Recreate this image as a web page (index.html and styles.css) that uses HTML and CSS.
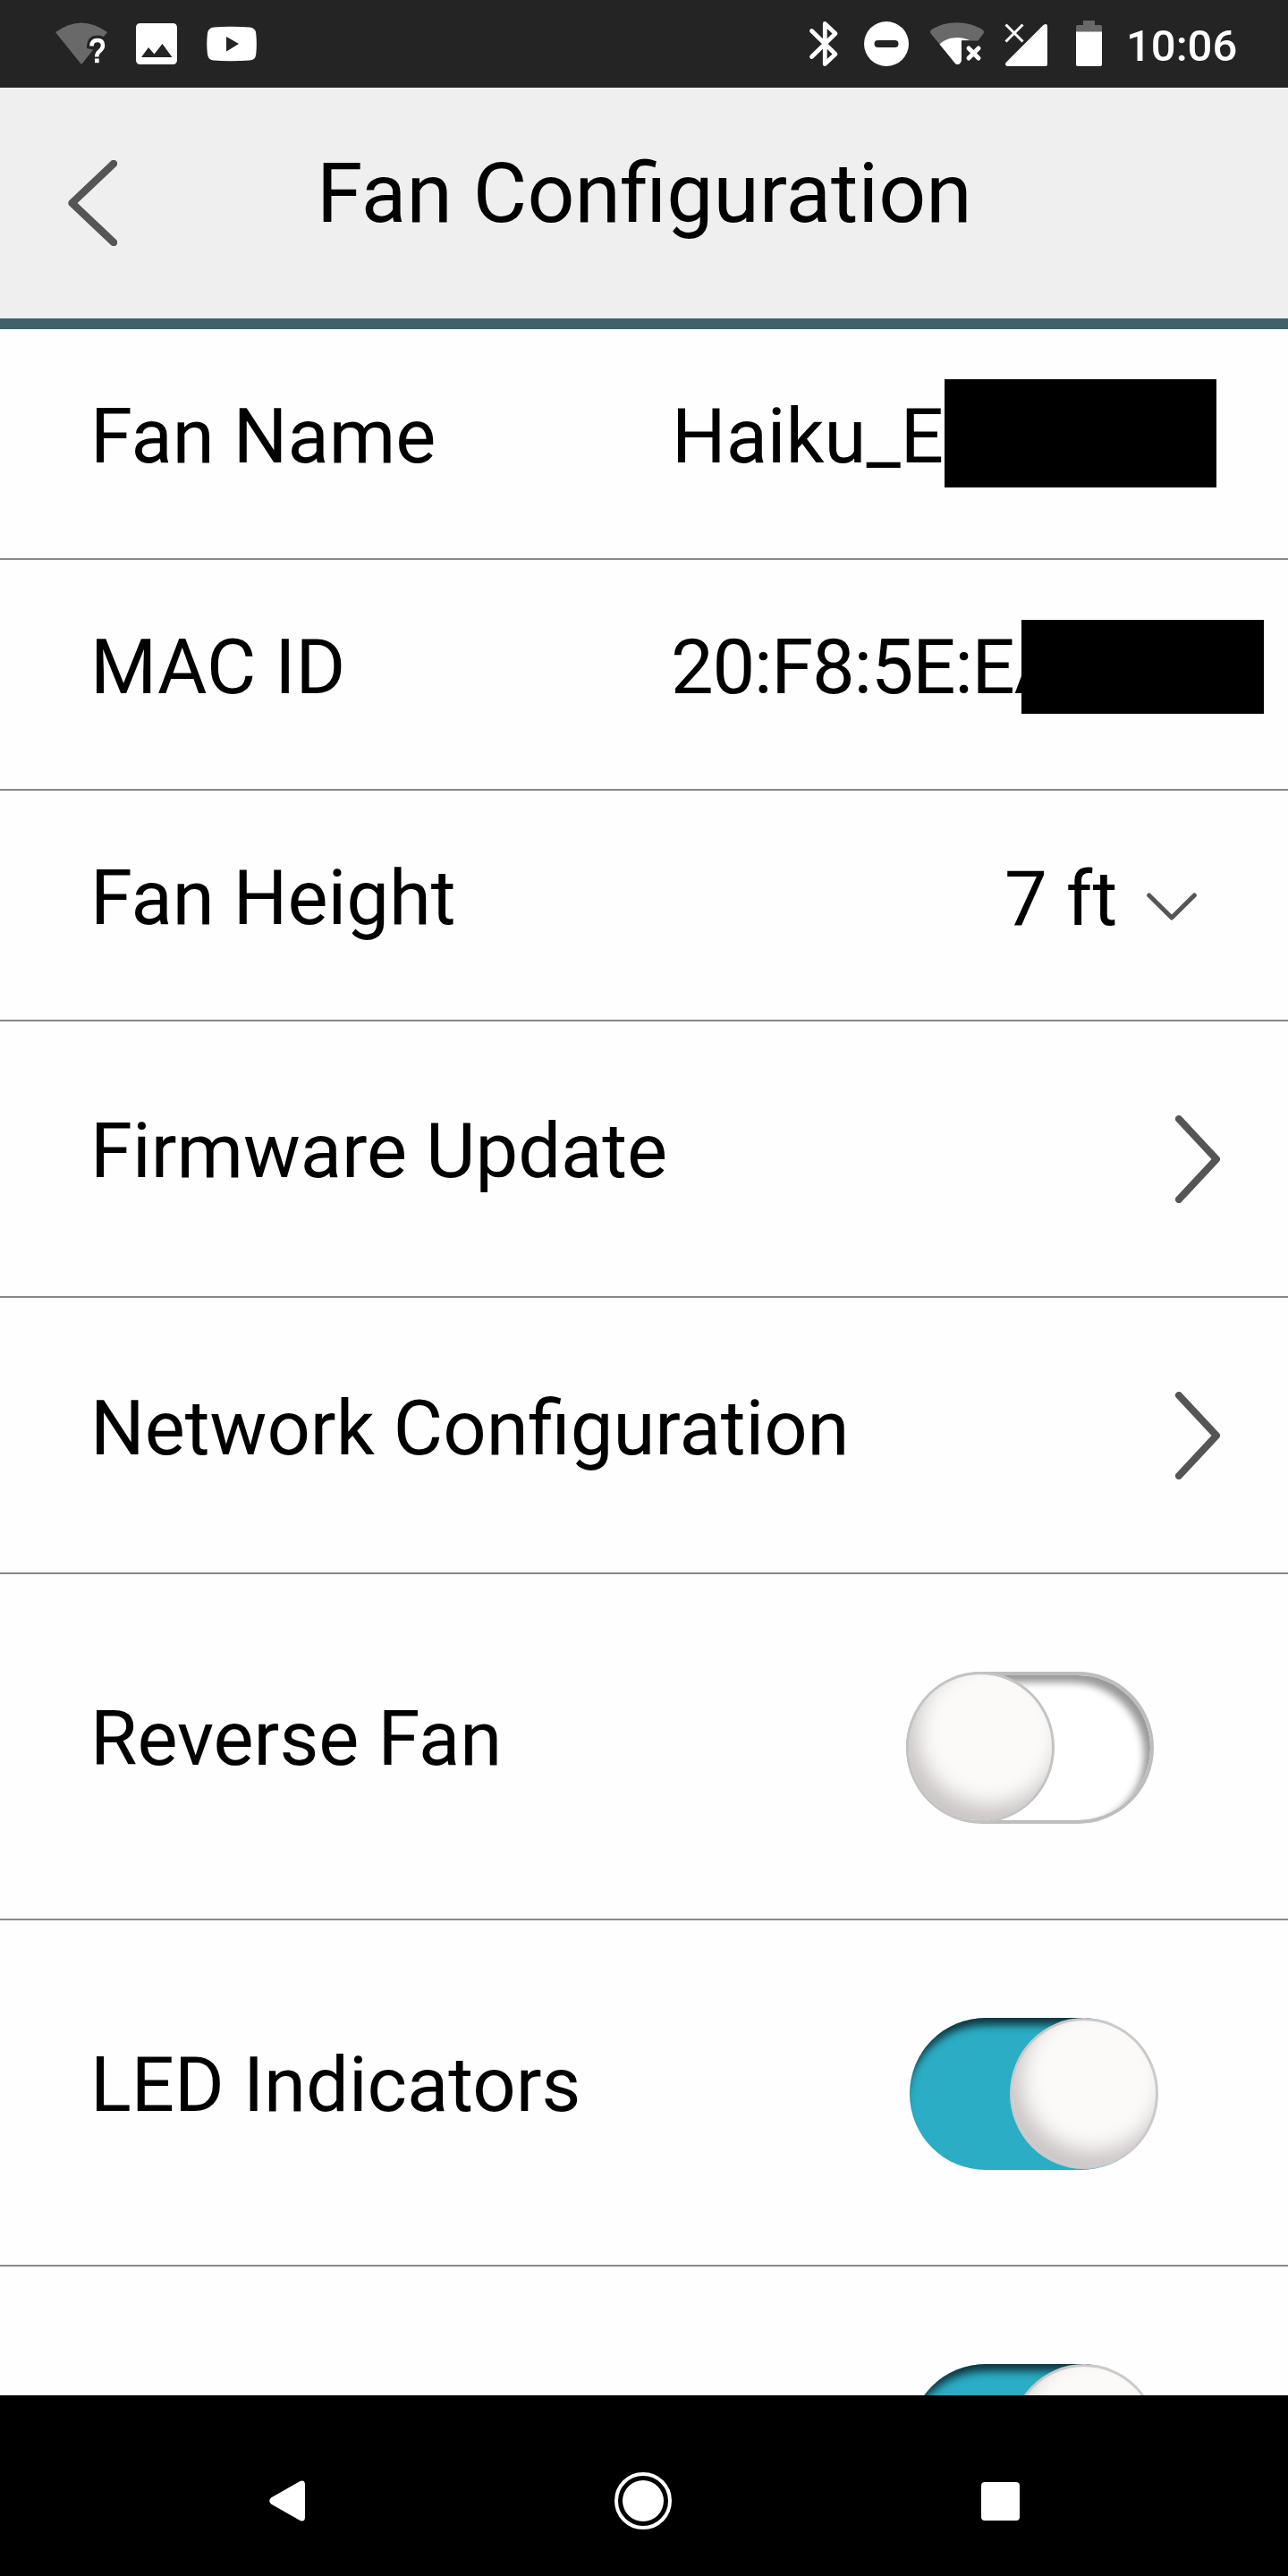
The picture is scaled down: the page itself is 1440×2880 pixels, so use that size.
FILE: index.html
```html
<!DOCTYPE html>
<html lang="en">
<head>
<meta charset="utf-8">
<title>Fan Configuration</title>
<link rel="stylesheet" href="styles.css">
</head>
<body>
<div class="screen">
  <div class="status-bar">
    <svg class="status-icons-left" width="240" height="98" viewBox="50 0 240 98">
      <path d="M62 36Q91 15 120 36L91 72Z" fill="#696969"/>
      <path d="M97 53C97 44 101 39.500 109 39.500C118 39.500 121 46 119 52L114 61V74H106V56L97 54Z" fill="#242424"/>
      <path d="M102.500 51.500Q102.500 45 109 45Q115 45 115 51Q115 54 111.500 57Q108.200 59.500 108.200 63.500" fill="none" stroke="#fff" stroke-width="4.500"/>
      <rect x="106" y="65.500" width="4.700" height="4.700" fill="#fff"/>
      <path fill="#fff" fill-rule="evenodd" d="M157 26H193Q198 26 198 31V67Q198 72 193 72H157Q152 72 152 67V31Q152 26 157 26ZM158 64H192.500L181.500 49L172.500 60.500L166 53Z"/>
      <path fill="#fff" fill-rule="evenodd" d="M239 30.500Q259 29 279 30.500Q285.500 31 286.200 37Q287.500 49 286.200 61Q285.500 67 279 67.500Q259 69 239 67.500Q233 67 232 61Q230.500 49 232 37Q233 31 239 30.500ZM253 41V57.500L267 49Z"/>
    </svg>
    <div class="status-right">
      <svg width="340" height="98" viewBox="900 0 340 98">
        <path d="M907.500 34.500L934 60.500L922.300 71.500V26.500L934 37.500L907.500 63.500" fill="none" stroke="#fff" stroke-width="4.800" stroke-linecap="round" stroke-linejoin="round"/>
        <circle cx="991" cy="49" r="25" fill="#fff"/>
        <rect x="977.500" y="45" width="27" height="8" rx="4" fill="#242424"/>
        <path d="M1041 38Q1039 36 1041 33.500C1057 22.500 1082 22.500 1099 33.500Q1101 36 1099 38L1093.500 45.500H1075V65L1070 72L1050.500 49.500Z" fill="#696969"/>
        <path d="M1050.500 49.500C1058 42 1072 39.500 1084 45H1075V66C1075 72 1070 73.500 1067.500 70.500Z" fill="#fff"/>
        <path d="M1075 46H1105V76H1075Z" fill="#242424"/>
        <path d="M1083 54L1094 65M1094 54L1083 65" stroke="#fff" stroke-width="5" stroke-linecap="round"/>
        <path d="M1126 74Q1122.500 73 1125 69.500L1166.500 28Q1171 25 1171 30V72Q1171 74 1169 74Z" fill="#fff"/>
        <path d="M1124.500 27.500L1143.500 46.500M1143.500 27.500L1124.500 46.500" stroke="#fff" stroke-width="3"/>
        <path d="M1211 23H1224V28H1230Q1232 28 1232 30V36H1203V30Q1203 28 1205 28H1211Z" fill="#696969"/>
        <path d="M1203 35.500H1232V72Q1232 74 1230 74H1205Q1203 74 1203 72Z" fill="#fff"/>
      </svg>
      <span class="clock">10:06</span>
    </div>
  </div>

  <header class="header">
    <svg class="back" width="55" height="96" viewBox="0 0 55 96"><path d="M51 4L4.500 48L51 92" fill="none" stroke="#555" stroke-width="8.500" stroke-linecap="round" stroke-linejoin="round"/></svg>
    <h1 class="title">Fan Configuration</h1>
  </header>

  <main class="list">
    <div class="row">
      <span class="label">Fan Name</span>
      <span class="value">Haiku_E</span>
      <span class="redaction redaction-name"></span>
    </div>
    <div class="row">
      <span class="label">MAC ID</span>
      <span class="value value-mac">20:F8:5E:EA</span>
      <span class="redaction redaction-mac"></span>
    </div>
    <div class="row">
      <span class="label">Fan Height</span>
      <span class="height">7 ft</span>
      <svg class="down" width="56" height="32" viewBox="0 0 56 32"><path d="M2.700 3L28 28L53.300 3" fill="none" stroke="#555" stroke-width="5" stroke-linecap="round" stroke-linejoin="round"/></svg>
    </div>
    <div class="row row-link">
      <span class="label label-firmware">Firmware Update</span>
      <svg class="next" width="50" height="98" viewBox="0 0 50 98"><path d="M4 4L46 49L4 94" fill="none" stroke="#555" stroke-width="8" stroke-linecap="round" stroke-linejoin="round"/></svg>
    </div>
    <div class="row row-link">
      <span class="label">Network Configuration</span>
      <svg class="next" width="50" height="98" viewBox="0 0 50 98"><path d="M4 4L46 49L4 94" fill="none" stroke="#555" stroke-width="8" stroke-linecap="round" stroke-linejoin="round"/></svg>
    </div>
    <div class="row row-toggle">
      <span class="label">Reverse Fan</span>
      <span class="toggle"><span class="knob"></span></span>
    </div>
    <div class="row row-toggle">
      <span class="label">LED Indicators</span>
      <span class="toggle on"><span class="knob"></span></span>
    </div>
    <div class="row row-toggle">
      <span class="label"></span>
      <span class="toggle on"><span class="knob"></span></span>
    </div>
  </main>

  <nav class="nav-bar">
    <svg width="40" height="46" viewBox="0 0 40 46"><path d="M34.500 1Q40 -1 40 5V41Q40 47 34.500 45L2 26.500Q-1.500 23 2 19.500Z" fill="#fff"/></svg>
    <svg width="66" height="66" viewBox="0 0 66 66"><circle cx="33" cy="33" r="30" fill="none" stroke="#fff" stroke-width="4"/><circle cx="33" cy="33" r="23" fill="#fff"/></svg>
    <span class="recents"></span>
  </nav>
</div>
</body>
</html>
```
FILE: styles.css
```css
* { box-sizing: border-box; }
body { margin: 0; background: #fff; color: #000; font-family: Roboto, "Liberation Sans", sans-serif; }
svg { display: block; flex: none; }
.screen { width: 1440px; height: 2880px; display: flex; flex-direction: column; overflow: hidden; background: #fefefe; }

.status-bar { flex: none; height: 98px; padding: 0 56px 0 50px; display: flex; justify-content: space-between; background: #242424; color: #fff; }
.status-right { display: flex; gap: 19px; }
.clock { width: 125px; font-size: 49px; font-weight: 500; line-height: 98px; padding-top: 3px; white-space: nowrap; }

.header { flex: none; height: 270px; display: grid; grid-template-columns: 354px 1fr; background: #efefef; border-bottom: 12px solid #40606c; }
.back { margin: 81px 0 0 76px; }
.title { margin: 0; padding-top: 64px; font-size: 93px; font-weight: 400; line-height: 110px; white-space: nowrap; }

.list { flex: 1; min-height: 0; overflow: hidden; }
.row { position: relative; display: flex; height: 258px; padding-left: 101px; border-bottom: 2px solid #888; font-size: 85px; line-height: 98px; white-space: nowrap; }
.label { width: 650px; padding-top: 71px; }
.value { padding-top: 71px; }
.value-mac { margin-left: -1px; letter-spacing: -1.3px; }
.height { width: 150px; margin-left: 372px; padding-top: 72px; }
.down { margin: 114px 0 0 9px; }
.redaction { position: absolute; background: #000; }
.redaction-name { left: 1056px; top: 56px; width: 304px; height: 121px; }
.redaction-mac { left: 1142px; top: 67px; width: 271px; height: 105px; }

.row-link { height: 309px; justify-content: space-between; padding-right: 76px; }
.row-link .label { width: auto; padding-top: 97px; }
.row-link .label-firmware { padding-top: 96px; }
.next { margin-top: 105px; }

.row-toggle { height: 387px; }
.row-toggle .label { width: 912px; padding-top: 135px; }
.toggle { flex: none; width: 277px; height: 170px; margin-top: 109px; border-radius: 85px; border: 4px solid #bdbdbd; background: #fff; box-shadow: inset -7px 8px 9px #999; }
.knob { display: block; width: 166px; height: 169px; margin: -4px 0 0 -4px; border-radius: 50%; border: 3px solid #c3c3c3; background: #fbfaf9; box-shadow: inset 10px -17px 22px #cbc6c6; }
.toggle.on { margin-left: 4px; border: 0; background: #2badc5; box-shadow: inset 0 13px 10px -5px #10353d; }
.toggle.on .knob { margin: 0 0 0 112px; border-color: rgba(185, 185, 185, .75); }

.nav-bar { flex: none; height: 202px; padding: 34px 300px 0 301px; display: flex; align-items: center; justify-content: space-between; background: #000; }
.recents { width: 43px; height: 43px; border-radius: 4px; background: #fff; }
```
